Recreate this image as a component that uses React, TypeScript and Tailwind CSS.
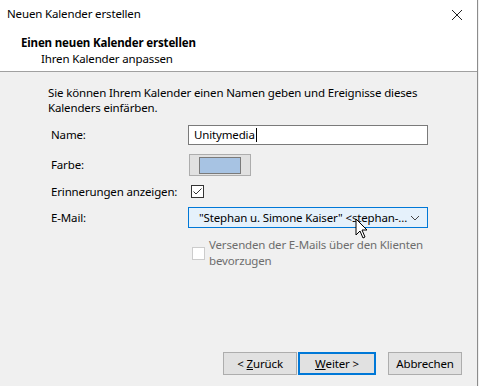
import React from "react";

const font = { fontFamily: '"Segoe UI", "Noto Sans", "Open Sans", sans-serif' };

export default function App() {
  return (
    <div
      className="relative w-[479px] h-[386px] bg-[#f0f0f0] text-[11.5px] tracking-[-0.15px] text-black overflow-hidden"
      style={font}
    >
      <div className="w-[478px] h-[386px] border-r border-[#8c8c8c] flex flex-col">
        {/* Header */}
        <div className="bg-white h-[72px] border-b border-[#a0a0a0] flex flex-col">
          <div className="h-[28px] flex items-center justify-between pl-[7px] pr-[14px] leading-[16px]">
            <span>Neuen Kalender erstellen</span>
            <svg width="12" height="12" viewBox="0 0 12 12" className="mt-[1px]">
              <path d="M1 1 L11 11 M11 1 L1 11" stroke="#222" strokeWidth="1" />
            </svg>
          </div>
          <div className="pl-[21px] mt-[7px] font-bold leading-[16px]">Einen neuen Kalender erstellen</div>
          <div className="pl-[41px] leading-[16px]">Ihren Kalender anpassen</div>
        </div>

        {/* Body */}
        <div className="flex flex-col pl-[48px] pt-[13px]">
          <p className="leading-[15px] w-[400px]">
            Sie können Ihrem Kalender einen Namen geben und Ereignisse dieses Kalenders einfärben.
          </p>

          <div className="mt-[9px] flex items-center h-[21px] pl-[3px]">
            <span className="w-[137px]">Name:</span>
            <div className="w-[240px] h-[20px] bg-white border border-[#7a7a7a] flex items-center pl-[5px]">
              <span>Unitymedia</span>
              <span className="w-px h-[14px] bg-black ml-[1px]" />
            </div>
          </div>

          <div className="mt-[9px] flex items-center h-[22px] pl-[3px]">
            <span className="w-[138px]">Farbe:</span>
            <div className="w-[62px] h-[22px] bg-[#e1e1e1] border border-[#adadad] flex items-center justify-center">
              <div className="w-[42px] h-[17px] bg-[#a7c3e3] border border-[#7a7a7a]" />
            </div>
          </div>

          <div className="mt-[6px] flex items-center h-[19px] pl-[3px]">
            <span className="w-[140px]">Erinnerungen anzeigen:</span>
            <div className="w-[13px] h-[13px] bg-white border border-[#333] flex items-center justify-center">
              <svg width="11" height="11" viewBox="0 0 11 11">
                <path d="M1.5 5.5 L4 8 L9.5 2.5" stroke="#333" strokeWidth="1" fill="none" />
              </svg>
            </div>
          </div>

          <div className="mt-[6px] flex items-center h-[21px] pl-[3px]">
            <span className="w-[137px]">E-Mail:</span>
            <div className="w-[240px] h-[21px] bg-[#e5f1fb] border border-[#0078d7] flex items-center pl-[10px] pr-[7px]">
              <span className="flex-1 whitespace-nowrap">"Stephan u. Simone Kaiser" &lt;stephan-...</span>
              <svg width="10" height="6" viewBox="0 0 10 6" className="ml-[2px] shrink-0">
                <path d="M1 1 L5 5 L9 1" stroke="#444" strokeWidth="1" fill="none" />
              </svg>
            </div>
          </div>

          <div className="mt-[9px] flex pl-[144px]">
            <div className="w-[13px] h-[13px] bg-white border border-[#cccccc] mt-[10px] shrink-0" />
            <span className="ml-[4px] leading-[16px] text-[#6d6d6d] w-[230px]">
              Versenden der E-Mails über den Klienten bevorzugen
            </span>
          </div>
        </div>

        {/* Buttons */}
        <div className="mt-auto mb-[11px] flex justify-end pr-[15px]">
          <button className="w-[74px] h-[23px] bg-[#e1e1e1] border border-[#adadad] flex items-center justify-center">
            &lt; <span className="underline ml-[3px]">Z</span>urück
          </button>
          <button className="ml-[1px] w-[78px] h-[23px] bg-[#e1e1e1] border-2 border-[#0078d7] flex items-center justify-center">
            <span className="underline">W</span>eiter &gt;
          </button>
          <button className="ml-[12px] w-[74px] h-[23px] bg-[#e1e1e1] border border-[#adadad] flex items-center justify-center">
            Abbrechen
          </button>
        </div>
      </div>

      {/* Mouse cursor */}
      <svg
        className="absolute left-[355px] top-[218px]"
        width="14"
        height="22"
        viewBox="0 0 14 22"
      >
        <path
          d="M1 1 L1 17 L5 13 L8 20 L10 19 L7 12 L12 12 Z"
          fill="white"
          stroke="black"
          strokeWidth="1"
          strokeLinejoin="round"
        />
      </svg>
    </div>
  );
}
